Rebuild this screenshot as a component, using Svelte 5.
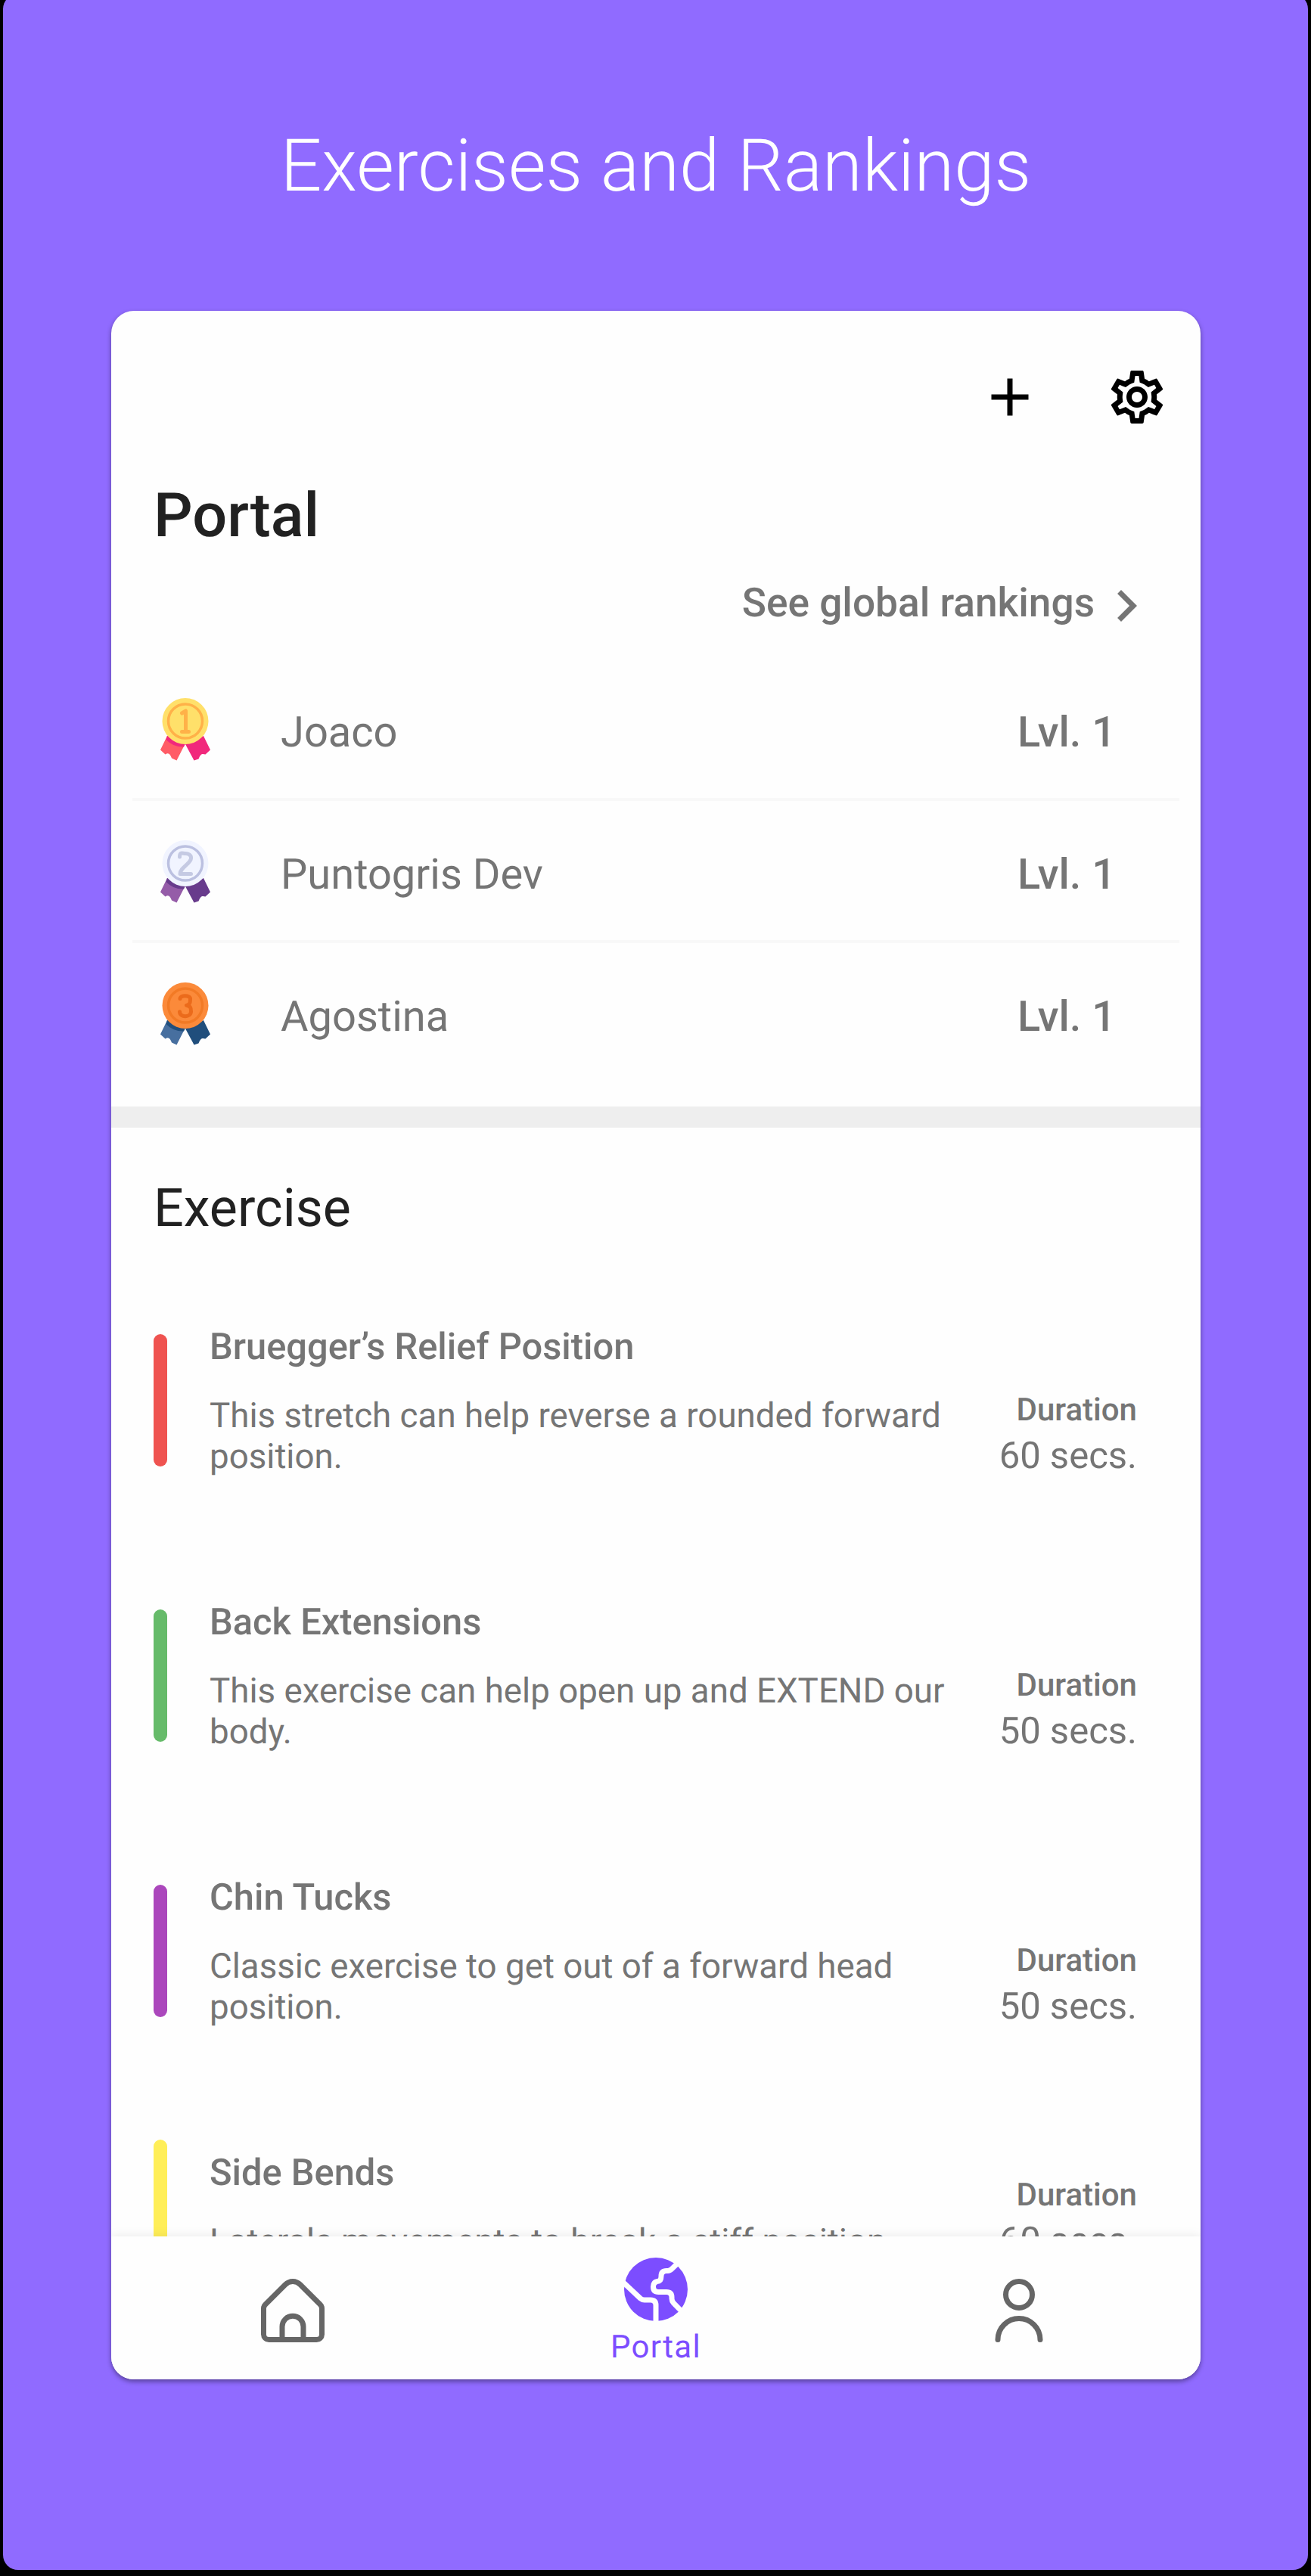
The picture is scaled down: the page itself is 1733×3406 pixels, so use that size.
<script lang="ts">
  const rankings = [
    { place: 1, name: 'Joaco', level: 'Lvl. 1', disc: '#ffe06a', ring: '#ffb148', digit: '#ffb148', light: '#ff5c66', dark: '#f1287c' },
    { place: 2, name: 'Puntogris Dev', level: 'Lvl. 1', disc: '#f1f4ff', ring: '#bbc0e0', digit: '#c5cae3', light: '#955ca8', dark: '#683b8c' },
    { place: 3, name: 'Agostina', level: 'Lvl. 1', disc: '#fb8a3a', ring: '#f27a25', digit: '#eb6b1b', light: '#476f9f', dark: '#204e7c' },
  ];

  const digits: Record<number, string> = {
    1: 'M240.500 943l5-3v27.500M240.500 967.500h9',
    2: 'M237.500 945c0-7 3.500-4.500 7.500-4.500s8 2 7.500 6.500c-0.500 7-14.500 12-14.500 20.500h14.500',
    3: 'M238 944.500c0-5 13.500-5 13.500 0c0 6-0.500 7.500-5 8.800c5.500 1 6 3.500 6 8c0 8.500-15 8.500-15 0.500',
  };

  const exercises = [
    { name: 'Bruegger’s Relief Position', text: 'This stretch can help reverse a rounded forward position.', time: '60 secs.', color: '#ef5350' },
    { name: 'Back Extensions', text: 'This exercise can help open up and EXTEND our body.', time: '50 secs.', color: '#66bb6a' },
    { name: 'Chin Tucks', text: 'Classic exercise to get out of a forward head position.', time: '50 secs.', color: '#ab47bc' },
    { name: 'Side Bends', text: 'Laterals movements to break a stiff position.', time: '60 secs.', color: '#ffee58' },
  ];
</script>

<div class="stage">
  <div class="poster">
    <h1>Exercises and Rankings</h1>
    <main class="card">
      <div class="content">
        <header class="toolbar">
          <svg class="icon" viewBox="0 0 24 24"><path d="M19 13h-6v6h-2v-6H5v-2h6V5h2v6h6v2z" /></svg>
          <svg class="icon" viewBox="0 0 24 24"><path d="M19.430 12.980c.04-.32.07-.64.07-.98 0-.34-.03-.66-.07-.98l2.110-1.650c.19-.15.24-.42.12-.64l-2-3.460c-.09-.16-.26-.25-.44-.25-.06 0-.12.010-.17.030l-2.490 1c-.52-.4-1.080-.73-1.690-.98l-.38-2.650C14.460 2.180 14.250 2 14 2h-4c-.25 0-.46.18-.49.42l-.38 2.650c-.61.25-1.170.59-1.690.98l-2.490-1c-.06-.02-.12-.03-.18-.03-.17 0-.34.09-.43.25l-2 3.460c-.13.22-.07.49.12.64l2.110 1.650c-.04.32-.07.65-.07.98 0 .33.030.66.070.98l-2.110 1.650c-.19.15-.24.42-.12.64l2 3.460c.09.16.26.25.44.25.06 0 .12-.01.17-.03l2.490-1c.52.4 1.080.73 1.690.98l.38 2.650c.03.24.24.42.49.42h4c.25 0 .46-.18.49-.42l.38-2.650c.61-.25 1.170-.59 1.690-.98l2.490 1c.06.02.12.03.18.03.17 0 .34-.09.43-.25l2-3.460c.12-.22.07-.49-.12-.64l-2.110-1.650zm-1.980-1.710c.04.31.05.52.05.73 0 .21-.02.43-.05.73l-.14 1.130.89.7 1.080.84-.7 1.210-1.270-.51-1.040-.42-.9.68c-.43.32-.84.56-1.250.73l-1.060.43-.16 1.130-.2 1.350h-1.400l-.19-1.350-.16-1.130-1.060-.43c-.43-.18-.83-.41-1.230-.71l-.91-.7-1.060.43-1.270.51-.7-1.210 1.080-.84.89-.7-.14-1.130c-.03-.31-.05-.54-.05-.74s.02-.43.05-.73l.14-1.130-.89-.7-1.080-.84.7-1.210 1.270.51 1.040.42.9-.68c.43-.32.84-.56 1.250-.73l1.060-.43.16-1.130.2-1.350h1.390l.19 1.350.16 1.130 1.060.43c.43.18.83.41 1.230.71l.91.7 1.060-.43 1.270-.51.7 1.210-1.070.85-.89.7.14 1.130zM12 8c-2.210 0-4 1.790-4 4s1.790 4 4 4 4-1.790 4-4-1.790-4-4-4zm0 6c-1.100 0-2-.9-2-2s.9-2 2-2 2 .9 2 2-.9 2-2 2z" /></svg>
        </header>
        <h2>Portal</h2>
        <div class="more">
          <span>See global rankings</span>
          <svg class="icon" viewBox="0 0 24 24"><path d="M10 6L8.590 7.410 13.170 12l-4.580 4.590L10 18l6-6z" /></svg>
        </div>
        <ul class="rankings">
          {#each rankings as r}
            <li>
              <svg class="medal" viewBox="210 920 70 88">
                <path fill={r.light} d="M221 973L212 991.500L218.500 997.500C223 994.500 225 997 227 1002.500L233.500 1005.500L246 981Z" />
                <path fill={r.dark} d="M221 973L219.500 978Q229 988 243 987.500L247 979ZM245 984L256.500 1005.500L262.500 1003.500C265 997 267 996 271.500 997.500L278 991.500L269 973Z" />
                <circle cx="245" cy="953.500" r="30.500" fill={r.disc} />
                <circle cx="245" cy="953.500" r="22.500" fill="none" stroke={r.ring} stroke-width="3.500" />
                <path d={digits[r.place]} fill="none" stroke={r.digit} stroke-width="5" stroke-linecap="round" stroke-linejoin="round" />
              </svg>
              <span class="name">{r.name}</span>
              <strong>{r.level}</strong>
            </li>
          {/each}
        </ul>
        <div class="band"></div>
        <h3>Exercise</h3>
        {#each exercises as e}
          <article>
            <i class="bar" style:background={e.color}></i>
            <div class="info">
              <h4>{e.name}</h4>
              <p>{e.text}</p>
            </div>
            <div class="duration">
              <b>Duration</b>
              <span>{e.time}</span>
            </div>
          </article>
        {/each}
      </div>
      <nav>
        <div class="tab">
          <svg class="icon" viewBox="0 0 24 24"><path d="M23.121 9.069L15.536 1.483a5.008 5.008 0 0 0-7.072 0L.879 9.069A2.978 2.978 0 0 0 0 11.190v9.817a3 3 0 0 0 3 3H21a3 3 0 0 0 3-3V11.190A2.978 2.978 0 0 0 23.121 9.069ZM15 22.007H9V18.073a3 3 0 0 1 6 0Zm7-1a1 1 0 0 1-1 1H17V18.073a5 5 0 0 0-10 0v3.934H3a1 1 0 0 1-1-1V11.190a1.008 1.008 0 0 1 .293-.707L9.878 2.900a3.008 3.008 0 0 1 4.244 0l7.585 7.586A1.008 1.008 0 0 1 22 11.190Z" /></svg>
        </div>
        <div class="tab active">
          <svg class="icon" viewBox="0 0 24 24">
            <circle cx="12" cy="12" r="12" />
            <path class="cut" d="M-1 8.700L6.100 15.400Q6.800 16 7.700 16H10Q12 16 12 18V25M21.400 1L18 4.300Q17.300 5 16.500 5H16Q14 5 14 7Q14 9 12.500 9Q11 9.300 11 11Q11 13 13 13H16Q18 13 18 15V15.500Q18 16.400 18.700 17.200L22.500 21.100" />
          </svg>
          <span>Portal</span>
        </div>
        <div class="tab">
          <svg class="icon person" viewBox="0 0 24 24"><circle cx="12" cy="6" r="5" /><path d="M4 23a8 8 0 0 1 16 0" /></svg>
        </div>
      </nav>
    </main>
  </div>
</div>

<style>
  :global(body) { background: #000; }
  .stage {
    box-sizing: border-box; width: 1733px; height: 3406px; padding: 0 4px 8px;
    overflow: hidden; background: #000; font-family: Roboto, sans-serif; color: #757575;
    text-rendering: geometricPrecision;
  }
  h1, h2, h3, h4, p, ul { margin: 0; padding: 0; font-weight: 400; }
  .poster {
    box-sizing: border-box; height: 3406px; margin-top: -8px; padding: 8px 142px 0 143px;
    border-radius: 20px; background: #906bff; overflow: hidden;
  }
  h1 {
    box-sizing: border-box; height: 411px; padding-top: 163px; text-align: center;
    font-size: 96px; line-height: 114px; font-weight: 300; color: #fff; white-space: nowrap;
  }
  .card {
    display: flex; flex-direction: column; width: 1440px; height: 2735px; overflow: hidden;
    border-radius: 30px; background: #fefefe; box-shadow: 0 3px 6px rgba(0, 0, 0, .4);
  }
  .content { flex: 1; min-height: 0; overflow: hidden; }
  .icon { display: block; flex: none; width: 84px; height: 84px; fill: currentColor; overflow: visible; }
  .toolbar { display: flex; justify-content: flex-end; gap: 84px; padding: 72px 42px 0 0; color: #000; }
  h2 { margin: 73px 56px 0; line-height: 84px; font-size: 81px; font-weight: 500; color: #212121; }
  .more { display: flex; align-items: center; justify-content: flex-end; margin-top: 35px; padding-right: 56px; height: 84px; font-size: 53.2px; font-weight: 500; line-height: 64px; }
  .more span { padding-bottom: 8px; }
  .rankings { list-style: none; padding: 28px 28px 32px; }
  li { box-sizing: border-box; display: flex; align-items: center; height: 188px; padding: 4px 84px 0 35px; border-bottom: 4px solid #f8f8f8; }
  li:last-child { border-bottom: 0; height: 184px; }
  .medal { width: 70px; height: 88px; flex: none; margin-bottom: 2px; }
  .name { flex: 1; margin-left: 91px; padding-top: 6px; font-size: 56px; }
  strong { padding-top: 6px; font-size: 56px; font-weight: 500; }
  .band { height: 28px; background: #eee; }
  h3 { margin: 66px 56px 32px; font-size: 70px; line-height: 82px; color: #212121; }
  article { display: flex; align-items: center; padding: 81px 84px 81px 56px; }
  /* Negative margins keep the bar from stretching rows with a one-line text. */
  .bar { flex: none; width: 18px; height: 175px; margin: -40px 0 -36px; border-radius: 9px; }
  .info { width: 1000px; margin-left: 56px; }
  h4 { margin-bottom: 37px; font-size: 48.8px; line-height: 57px; font-weight: 500; }
  p { font-size: 45.7px; line-height: 54px; }
  .duration { flex: 1; align-self: flex-end; text-align: right; white-space: nowrap; }
  .duration b, .duration span { display: block; }
  .duration b { margin-bottom: 6px; font-size: 42px; line-height: 50px; font-weight: 500; }
  .duration span { font-size: 49px; line-height: 58px; }
  nav { position: relative; display: grid; grid-template-columns: repeat(3, 1fr); height: 189px; background: #fefefe; box-shadow: 0 -2px 12px rgba(0, 0, 0, .07); }
  .tab { display: flex; flex-direction: column; align-items: center; padding-top: 56px; color: #666; }
  .active { padding-top: 28px; color: #7c4dff; }
  .active span { margin-top: 10px; font-size: 42px; line-height: 50px; letter-spacing: 1.300px; }
  .active .icon { overflow: hidden; }
  .cut { fill: none; stroke: #fefefe; stroke-width: 2; }
  .person { fill: none; stroke: currentColor; stroke-width: 2; stroke-linecap: round; }
</style>
